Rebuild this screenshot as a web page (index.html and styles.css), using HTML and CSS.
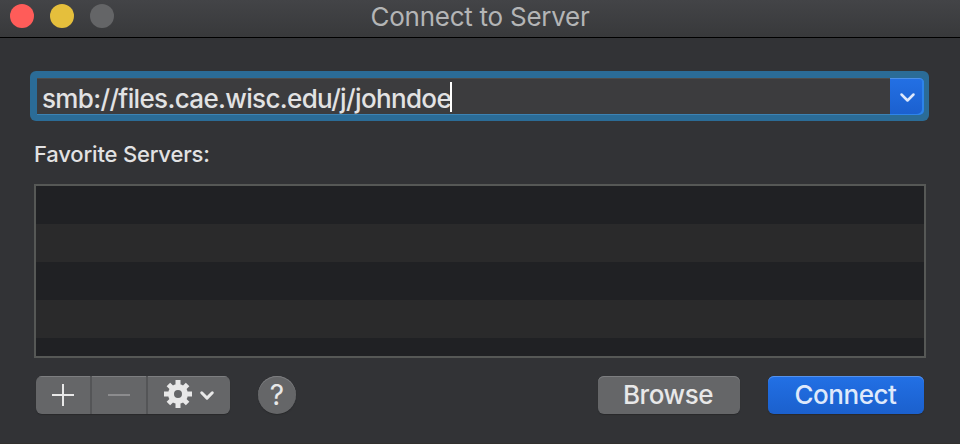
FILE: index.html
```html
<!DOCTYPE html>
<html lang="en">

<head>
    <meta charset="UTF-8">
    <title>Connect to Server</title>
    <link rel="stylesheet" href="styles.css">
</head>

<body>
    <div class="titlebar">
        <div class="lights">
            <span class="light close"></span>
            <span class="light minimize"></span>
            <span class="light zoom"></span>
        </div>
        <div class="title"><span>Connect to Server</span></div>
    </div>

    <div class="content">
        <div class="combo">
            <div class="address"><span>smb://files.cae.wisc.edu/j/johndoe</span><i class="caret"></i></div>
            <div class="dropdown">
                <svg width="34" height="37" viewBox="0 0 34 37">
                    <path d="M11.5 16.5l6 6 6-6" fill="none" stroke="#dfe9fb" stroke-width="2.5" stroke-linecap="round" stroke-linejoin="round" />
                </svg>
            </div>
        </div>

        <div class="label"><span>Favorite Servers:</span></div>
        <div class="servers"></div>

        <div class="footer">
            <div class="segments">
                <div class="segment add">
                    <svg width="54" height="38" viewBox="0 0 54 38">
                        <path d="M16 19h22M27 8v22" stroke="#e8e8e8" stroke-width="2" />
                    </svg>
                </div>
                <div class="segment remove">
                    <svg width="54" height="38" viewBox="0 0 54 38">
                        <path d="M16 19h22" stroke="#8c8c8e" stroke-width="2" />
                    </svg>
                </div>
                <div class="segment action">
                    <svg width="82" height="38" viewBox="0 0 82 38">
                        <g transform="translate(30 18)">
                            <g stroke="#e8e8e8" stroke-width="5">
                                <path d="M0 -14V-8M0 14V8M-14 0H-8M14 0H8" />
                                <path d="M-9.6 -9.6L-6 -6M9.6 9.6L6 6M-9.6 9.6L-6 6M9.6 -9.6L6 -6" />
                            </g>
                            <circle r="7" fill="none" stroke="#e8e8e8" stroke-width="6" />
                        </g>
                        <path d="M53.7 16.8l5.3 5.3 5.3-5.3" fill="none" stroke="#e8e8e8" stroke-width="3" stroke-linecap="round" stroke-linejoin="round" />
                    </svg>
                </div>
            </div>
            <div class="help">?</div>
            <div class="button browse"><span>Browse</span></div>
            <div class="button connect"><span>Connect</span></div>
        </div>
    </div>
</body>

</html>
```

FILE: styles.css
```css
body {
    margin: 0;
    box-sizing: border-box;
    height: 444px;
    overflow: hidden;
    border-bottom: 1px solid #31302e;
    background-color: #323336;
    font-family: Inter, "Liberation Sans", sans-serif;
    color: #e2e2e3;
}

svg {
    display: block;
}

.titlebar {
    display: grid;
    grid-template-columns: 120px 1fr 120px;
    height: 37px;
    border-bottom: 1px solid #000;
    background: linear-gradient(#434447, #38393b);
}

.lights {
    display: flex;
    gap: 16px;
    padding: 4px 0 0 10px;
}

.light {
    width: 24px;
    height: 24px;
    border-radius: 50%;
}

.close {
    background-color: #ff5c59;
}

.minimize {
    background-color: #e5bf3c;
}

.zoom {
    background-color: #646567;
}

.title {
    text-align: center;
    font-size: 26px;
    letter-spacing: -0.25px;
    line-height: 34px;
    color: #b4b5b6;
}

.content {
    padding: 33px 34px 0 30px;
}

.combo {
    display: flex;
    box-sizing: border-box;
    width: 899px;
    height: 50px;
    padding: 7px 5px 6px 7px;
    border-radius: 6px;
    background-color: #2b6c97;
}

.address {
    display: flex;
    flex: 1;
    align-items: center;
    box-sizing: border-box;
    padding-left: 5px;
    border-top: 1px solid #4e4b49;
    border-bottom: 1px solid #3c83b4;
    background-color: #3c3c3e;
    font-size: 26px;
    font-weight: 450;
    letter-spacing: -0.65px;
    white-space: nowrap;
}

.address span {
    padding-top: 3px;
}

.caret {
    width: 2px;
    height: 30px;
    margin-left: -1px;
    background-color: #fff;
}

.dropdown {
    width: 34px;
    border-radius: 0 5px 5px 0;
    background: linear-gradient(#2370e4, #1b60cf);
    box-shadow: inset -2px -1px 0 #2d84ea, inset 0 1px 0 #4d8fe8;
}

.label {
    height: 63px;
    padding-left: 4px;
    font-size: 22px;
    font-weight: 450;
    letter-spacing: -0.18px;
    line-height: 67px;
}

.servers {
    box-sizing: border-box;
    width: 892px;
    height: 174px;
    margin-left: 4px;
    border: 2px solid #565856;
    background: repeating-linear-gradient(#202124 0 38px, #2a2a2b 38px 76px) padding-box;
}

.footer {
    display: flex;
    padding: 18px 6px 0;
}

.segments {
    display: flex;
    border-radius: 6px;
    overflow: hidden;
    box-shadow: 0 1px 1px #28292b;
}

.segment {
    background-color: #656668;
    box-shadow: inset 0 1px 0 #7d7e80;
}

.add,
.remove {
    border-right: 2px solid #545557;
}

.help {
    width: 38px;
    height: 38px;
    margin-left: 28px;
    border-radius: 50%;
    background-color: #656668;
    box-shadow: inset 0 1px 0 #7d7e80, 0 1px 1px #28292b;
    font-size: 28px;
    line-height: 39px;
    text-align: center;
    color: #e8e8e8;
}

.button {
    width: 142px;
    height: 38px;
    border-radius: 6px;
    background-color: #656668;
    box-shadow: inset 0 1px 0 #7d7e80, 0 1px 1px #28292b;
    font-size: 26px;
    font-weight: 450;
    letter-spacing: -0.45px;
    line-height: 38px;
    text-align: center;
    color: #e8e8e8;
}

.browse {
    margin-left: auto;
    text-indent: -2px;
}

.connect {
    width: 156px;
    margin: 0 -4px 0 28px;
    background: linear-gradient(#2270e5, #1b60cd);
    box-shadow: inset 0 1px 0 #5592ec, 0 1px 1px #28292b;
    text-indent: -1px;
    color: #dfe9fb;
}
```
